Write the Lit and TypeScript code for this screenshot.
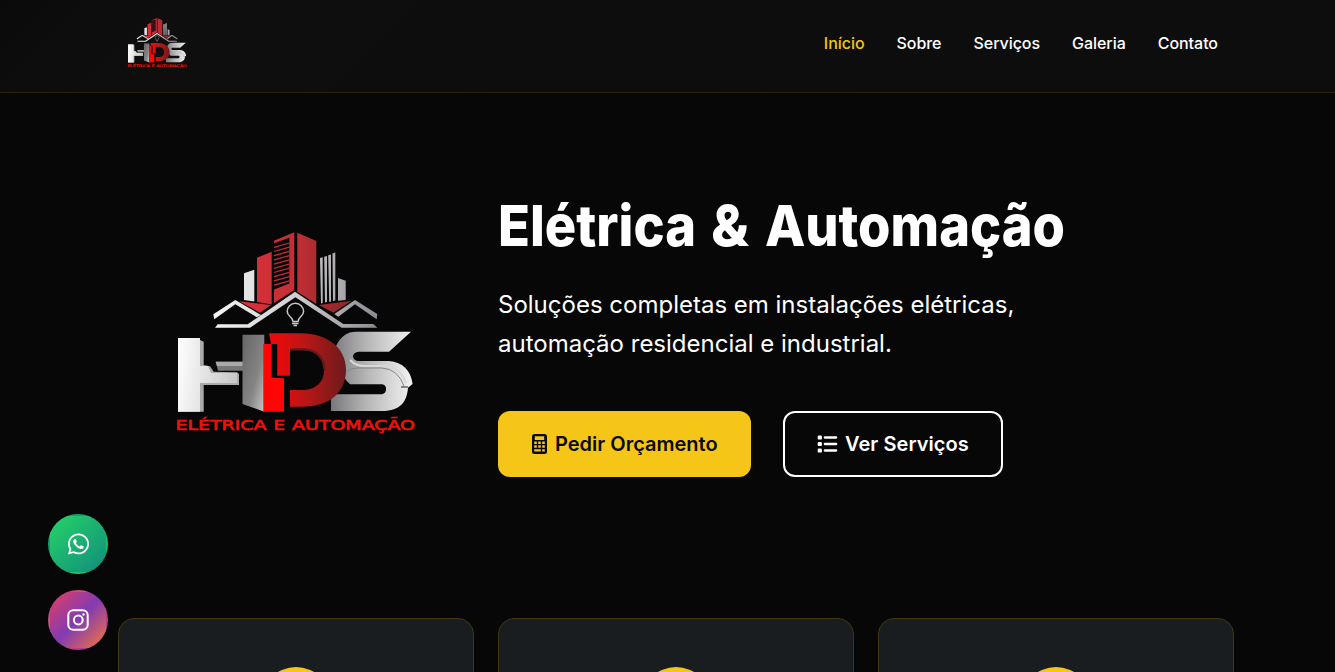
import { LitElement, html, css, svg } from "lit";
import { customElement } from "lit/decorators.js";

@customElement("hds-logo")
class HdsLogo extends LitElement {
  static styles = css`
    :host { display: block; }
    svg { display: block; width: 100%; height: 100%; }
    text { font: 400 13.5px "DejaVu Sans", sans-serif; fill: #f2100c; stroke: #f2100c; stroke-width: 0.6px; }
  `;
  render() {
    return html`<svg viewBox="170 220 250 220" role="img" aria-label="HDS">
      <defs>
        <linearGradient id="red" x1="240" x2="350" y1="0" y2="0" gradientUnits="userSpaceOnUse"><stop stop-color="#dc3038" /><stop offset=".5" stop-color="#c22f35" /><stop offset="1" stop-color="#88272a" /></linearGradient>
        <linearGradient id="sil" x1="215" x2="378" y1="0" y2="0" gradientUnits="userSpaceOnUse"><stop stop-color="#f4f4f4" /><stop offset=".5" stop-color="#cfcdd0" /><stop offset="1" stop-color="#8c8a90" /></linearGradient>
        <linearGradient id="h1" x2="1" y2=".15"><stop stop-color="#fff" /><stop offset="1" stop-color="#c9c9c9" /></linearGradient>
        <linearGradient id="h2" y2="1"><stop stop-color="#666" /><stop offset=".6" stop-color="#858585" /><stop offset="1" stop-color="#c8c8c8" /></linearGradient>
        <linearGradient id="d" x1="278" x2="346" y1="0" y2="0" gradientUnits="userSpaceOnUse"><stop stop-color="#e90b0b" /><stop offset=".45" stop-color="#b31717" /><stop offset="1" stop-color="#6c1b1c" /></linearGradient>
        <linearGradient id="s" x1="330" x2="410" y1="0" y2="0" gradientUnits="userSpaceOnUse"><stop stop-color="#77757a" /><stop offset=".45" stop-color="#b5b5b5" /><stop offset="1" stop-color="#f0f0f0" /></linearGradient>
      </defs>
      <g fill="url(#sil)">
        <path d="M244 273.3 254.3 269.7V301.5L244 300Z" />
        <path d="M320 258 322.7 257.3V303L321 303.5ZM324.2 256.8 327 256V302L325 302.5ZM328.2 255.3 331 254.5V301.5L329.2 302ZM332.5 253.5 335.3 252.5V300.5L333 301ZM338 278 345.7 280.7V300L338 300.7Z" />
        <path d="M213.3 314.3 235.3 300 261 315 256.7 317.3 235.3 304.3 214.3 319.3ZM217.7 324.3H247.7L295 291.7 343.3 324H373.3L377.3 327.7H341.7L295.4 297.3 250 327.7H215ZM334.3 314 355 300 377.3 314 376.7 319.3 355 304.3 338.3 316.7Z" />
      </g>
      <g fill="url(#red)">
        <path d="M257 257.7 271.7 251.7V304.5L257 302ZM274 240.7 294.3 232.3V290L274 303ZM297.3 232.7 316.3 241V304L297.3 291.7ZM239 301.3 271 305 260 312.7ZM319 305 351.7 300.7 333.3 312.7Z" />
      </g>
      <path d="M274 243.2 289.3 237.7V283.5L274 289.5Z" fill="#090707" />
      ${Array.from({ length: 10 }, (_, i) => svg`<path d=${`M274 ${247.3 + i * 4.2}L289.3 ${243 + i * 4.2}`} stroke="#c42e35" stroke-width="1.2" />`)}
      <path d="M293 321.5C293 317 287.2 316.5 287.2 311.5A8.2 8.2 0 0 1 303.6 311.5C303.6 316.5 298 317 298 321.5ZM292 323.5H298.5M293.5 325.5H297" fill="none" stroke="#c8c6c8" stroke-width="1.5" />

      <path d="M196 338 203.7 341.7V365L210 366.3 213.7 371.7 237 372.3 239 374V385H203.7V411.7H178Z" fill="#aaa" />
      <path d="M178 338H200V366H208L211 373H237V383H200V411.7H178Z" fill="url(#h1)" />
      <path d="M215.7 361.7H243V370.7H218Z" fill="#777" /><path d="M215.7 361.7H243V366H217Z" fill="#aaa" />
      <path d="M242.5 334.7H264.3V411.7L242.5 404Z" fill="url(#h2)" />
      <path d="M263.3 344H271.7V377.5L284 378.3V411.7H263.3Z" fill="#ff0505" />

      <path d="M336 346C341 336 347 331.7 356 331.7H411L389 351.7H359C351 351.7 351 361 359 361H389C403 362 411 371 412.6 384L408 387.7C407 401 401 411 382 411H331V394.3H382C387.5 393.5 387.5 384.5 382 384.3H350C341 376 336 362 336 346Z" fill="url(#s)" />
      <path d="M346 372Q350 368 357 368H382Q398 369 404 386" fill="none" stroke="#858388" stroke-width="1" />
      <path d="M350 360Q356 366 364 366H386Q400 367 406 383" fill="none" stroke="#d9d8d9" stroke-width="2" />
      <path d="M401 387H408" stroke="#222" stroke-width="1" />
      <path d="M269 333.3H301C327 333.3 346 348 346 369.5 346 393 329 406.7 302 406.7H290V390H305C317 389 324.3 381 324.3 369 324.3 357 315 349.5 302 349.3H290V375.7H277.3V344H271Z" fill="url(#d)" />
      <path d="M291 349.4H304C317 350 324.3 358 324.3 369" fill="none" stroke="#64191b" stroke-width="2.4" />
      <text x="175.5" y="430" textLength="91" lengthAdjust="spacingAndGlyphs">ELÉTRICA</text>
      <text x="273.5" y="430" textLength="11.500" lengthAdjust="spacingAndGlyphs">E</text>
      <text x="292" y="430" textLength="123" lengthAdjust="spacingAndGlyphs">AUTOMAÇÃO</text>
    </svg>`;
  }
}

@customElement("app-root")
class AppRoot extends LitElement {
  static styles = css`
    :host { display: block; height: 672px; overflow: hidden; position: relative; background: #070707; color: #fff; font-family: Inter, sans-serif; }
    * { box-sizing: border-box; }
    a { color: inherit; text-decoration: none; }
    header { height: 93px; padding: 0 117px 0 118px; display: flex; justify-content: space-between; background: linear-gradient(135deg, #0a0a0a, #0e0e0e 12%, #0d0d0d); border-bottom: 1px solid #292108; }
    .brand { width: 62px; height: 54.5px; margin: 15px 0 0 8px; }
    nav { display: flex; gap: 32px; padding-top: 30px; font-size: 16px; line-height: 26px; font-weight: 500; letter-spacing: -0.045px; }
    .active { color: #f5c518; }
    .hero { height: 525px; padding-left: 170px; display: flex; gap: 78px; }
    .mark { width: 250px; height: 220px; margin-top: 127px; flex: none; }
    .copy { padding-top: 99px; }
    h1 { margin: 0; height: 70px; }
    h1 svg { width: 580px; height: 70px; overflow: visible; }
    h1 text { fill: #fff; font: 800 57px Inter, sans-serif; }
    p { margin: 23px 0 0; font-size: 24px; line-height: 39px; white-space: nowrap; }
    .actions { display: flex; gap: 32px; margin-top: 48px; }
    .btn { height: 66px; border-radius: 12px; display: flex; align-items: center; font-size: 20px; font-weight: 600; white-space: nowrap; }
    .solid { width: 253px; padding-left: 34px; gap: 8px; background: #f5c518; color: #0a0a0a; }
    .outline { width: 220px; padding-left: 32px; gap: 7px; border: 2px solid #fff; letter-spacing: 0.06px; }
    .cards { display: grid; grid-template-columns: repeat(3, 356px); gap: 24px; padding-left: 118px; }
    .card { height: 300px; border: 1px solid #40370f; border-radius: 16px; background: #1a1d20; padding-top: 48px; display: flex; justify-content: center; }
    .disc { width: 70px; height: 70px; border-radius: 50%; background: #f5c518; }
    .social { position: absolute; left: 48px; top: 514px; display: grid; gap: 16px; }
    .round { width: 60px; height: 60px; border-radius: 50%; border: 2px solid transparent; display: grid; place-items: center; }
    .wa { background: linear-gradient(135deg, #25d366, #128c7e); }
    .ig { background: linear-gradient(135deg, #e4405f, #833ab4 50%, #f77737); }
    svg { display: block; }
  `;
  render() {
    return html`
      <header>
        <hds-logo class="brand"></hds-logo>
        <nav><a class="active" href="#">Início</a><a href="#">Sobre</a><a href="#">Serviços</a><a href="#">Galeria</a><a href="#">Contato</a></nav>
      </header>
      <section class="hero">
        <hds-logo class="mark"></hds-logo>
        <div class="copy">
          <h1><svg viewBox="0 0 580 70">
            <text x="0" y="54" textLength="198" lengthAdjust="spacingAndGlyphs">Elétrica</text>
            <text x="213" y="54" textLength="38" lengthAdjust="spacingAndGlyphs">&amp;</text>
            <text x="267" y="54" textLength="300" lengthAdjust="spacingAndGlyphs">Automação</text>
          </svg></h1>
          <p>Soluções completas em instalações elétricas,<br />automação residencial e industrial.</p>
          <div class="actions">
            <a class="btn solid" href="#"><svg width="15" height="20" viewBox="0 0 15 20" fill="currentColor"><path fill-rule="evenodd" d="M2.500 0H12.500Q15 0 15 2.500V17.500Q15 20 12.500 20H2.500Q0 20 0 17.500V2.500Q0 0 2.500 0ZM2.800 2.300V6H12.200V2.300ZM2.200 7.500V10H4.800V7.500ZM6.200 7.500V10H8.800V7.500ZM10.200 7.500V10H12.800V7.500ZM2.200 11.300V13.800H4.800V11.300ZM6.200 11.300V13.800H8.800V11.300ZM10.200 11.300V13.800H12.800V11.300ZM2.200 15.200V17.600H8.800V15.200ZM10.200 15.200V17.600H12.800V15.200Z" /></svg>Pedir Orçamento</a>
            <a class="btn outline" href="#"><svg width="21" height="20" viewBox="0 0 21 20" fill="currentColor"><rect x=".7" y="1.4" width="4.2" height="4.2" rx="1.2" /><rect x=".7" y="7.9" width="4.2" height="4.2" rx="1.2" /><rect x=".7" y="14.4" width="4.2" height="4.2" rx="1.2" /><rect x="6.7" y="2.3" width="13.6" height="2.4" rx="1.1" /><rect x="6.7" y="8.8" width="13.6" height="2.4" rx="1.1" /><rect x="6.7" y="15.3" width="13.6" height="2.4" rx="1.1" /></svg>Ver Serviços</a>
          </div>
        </div>
      </section>
      <section class="cards">${[0, 1, 2].map(() => html`<div class="card"><div class="disc"></div></div>`)}</section>
      <div class="social">
        <a class="round wa" href="#" aria-label="WhatsApp"><svg width="21" height="24" viewBox="0 0 448 512" fill="#fff"><path d="M380.9 97.1C339 55.1 283.2 32 223.9 32c-122.4 0-222 99.6-222 222 0 39.1 10.2 77.3 29.6 111L0 480l117.700-30.900c32.400 17.700 68.900 27 106.100 27h.1c122.300 0 224.100-99.600 224.100-222 0-59.300-25.200-115-67.100-157zm-157 341.600c-33.200 0-65.700-8.900-94-25.700l-6.700-4-69.800 18.300L72 359.200l-4.400-7c-18.500-29.400-28.200-63.300-28.200-98.200 0-101.700 82.800-184.500 184.600-184.500 49.300 0 95.600 19.200 130.400 54.100 34.800 34.900 56.200 81.200 56.100 130.500 0 101.800-84.900 184.600-186.600 184.600zm101.200-138.200c-5.500-2.800-32.800-16.200-37.900-18-5.100-1.900-8.800-2.800-12.500 2.800-3.700 5.600-14.300 18-17.600 21.800-3.200 3.700-6.500 4.200-12 1.400-32.600-16.300-54-29.100-75.500-66-5.700-9.800 5.700-9.100 16.300-30.300 1.800-3.700.9-6.900-.5-9.700-1.400-2.800-12.500-30.100-17.100-41.200-4.500-10.800-9.100-9.300-12.500-9.500-3.200-.2-6.900-.2-10.600-.2-3.700 0-9.700 1.400-14.800 6.900-5.100 5.600-19.400 19-19.400 46.300 0 27.300 19.900 53.700 22.600 57.400 2.800 3.700 39.100 59.700 94.800 83.800 35.200 15.200 49 16.500 66.600 13.900 10.700-1.600 32.800-13.400 37.400-26.400 4.600-13 4.600-24.100 3.200-26.400-1.300-2.500-5-3.900-10.500-6.600z" /></svg></a>
        <a class="round ig" href="#" aria-label="Instagram"><svg width="22" height="22" viewBox="0 0 22 22" fill="none" stroke="#fff" stroke-width="2"><rect x="1.300" y="1.300" width="19.400" height="19.400" rx="5" /><circle cx="11.300" cy="11" r="4.400" /><circle cx="16.500" cy="5.500" r="1.200" fill="#fff" stroke="none" /></svg></a>
      </div>
    `;
  }
}
